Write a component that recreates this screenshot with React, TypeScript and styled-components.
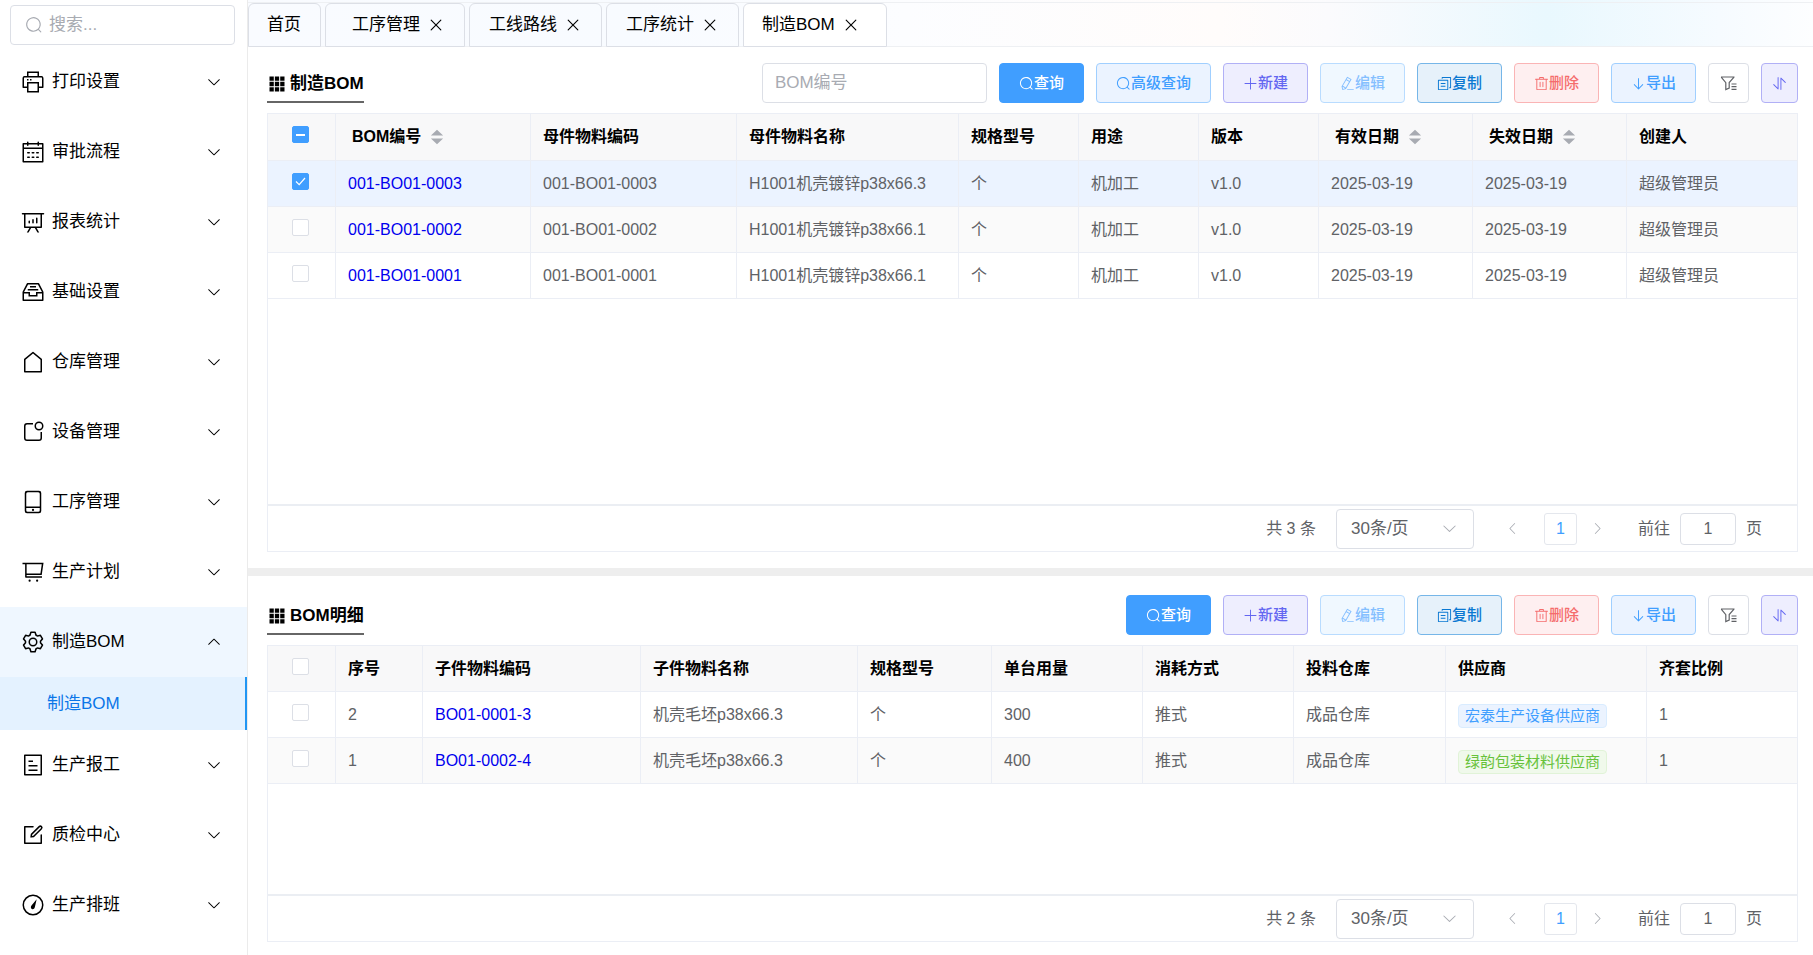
import React, { useState } from 'react';
import styled, { createGlobalStyle, css } from 'styled-components';

const GlobalStyle = createGlobalStyle`
  * { box-sizing: border-box; }
  body { margin: 0; background: #fff; }
  body, button, input, select {
    font-family: "Liberation Sans", "Noto Sans CJK SC", sans-serif;
    line-height: 20px;
  }
`;

/* ---------- icons ---------- */

const paths: Record<string, string> = {
  search:
    'm795.904 750.72 124.992 124.928a32 32 0 0 1-45.248 45.248L750.656 795.904a416 416 0 1 1 45.248-45.248zM480 832a352 352 0 1 0 0-704 352 352 0 0 0 0 704',
  arrowDown:
    'M831.872 340.864 512 652.672 192.128 340.864a30.592 30.592 0 0 0-42.752 0 29.12 29.12 0 0 0 0 41.6L489.664 714.24a32 32 0 0 0 44.672 0l340.288-331.712a29.12 29.12 0 0 0 0-41.728 30.592 30.592 0 0 0-42.752 0z',
  close:
    'M764.288 214.592 512 466.88 259.712 214.592a31.936 31.936 0 0 0-45.12 45.12L466.752 512 214.528 764.224a31.936 31.936 0 1 0 45.12 45.184L512 557.184l252.288 252.288a31.936 31.936 0 0 0 45.12-45.12L557.12 512.064l252.288-252.352a31.936 31.936 0 1 0-45.12-45.184z',
  printer:
    'M256 768H105.024c-14.272 0-19.456-1.472-24.64-4.288a29.056 29.056 0 0 1-12.16-12.096C65.536 746.432 64 741.248 64 727.04V379.072c0-42.816 4.48-58.304 12.8-73.984 8.384-15.616 20.672-27.904 36.288-36.288 15.68-8.32 31.168-12.8 73.984-12.8H256V64h512v192h68.928c42.816 0 58.304 4.48 73.984 12.8 15.616 8.384 27.904 20.672 36.288 36.288 8.32 15.68 12.8 31.168 12.8 73.984v347.904c0 14.272-1.472 19.456-4.288 24.64a29.056 29.056 0 0 1-12.096 12.16c-5.184 2.752-10.368 4.288-24.576 4.288H768v192H256zm64-192v320h384V576zm-64 128V512h512v192h128V379.072c0-29.376-1.408-36.48-5.248-43.776a23.296 23.296 0 0 0-10.048-10.048c-7.232-3.84-14.4-5.248-43.776-5.248H187.072c-29.376 0-36.48 1.408-43.776 5.248a23.296 23.296 0 0 0-10.048 10.048c-3.84 7.232-5.248 14.4-5.248 43.776V704zm64-448h384V128H320zm-64 128h64v64h-64zm128 0h64v64h-64z',
  calendar:
    'M128 384v512h768V192H768v32a32 32 0 1 1-64 0v-32H320v32a32 32 0 0 1-64 0v-32H128v128h768v64zm192-256h384V96a32 32 0 1 1 64 0v32h160a32 32 0 0 1 32 32v768a32 32 0 0 1-32 32H96a32 32 0 0 1-32-32V160a32 32 0 0 1 32-32h160V96a32 32 0 0 1 64 0zm-32 384h64a32 32 0 0 1 0 64h-64a32 32 0 0 1 0-64m0 192h64a32 32 0 1 1 0 64h-64a32 32 0 1 1 0-64m192-192h64a32 32 0 0 1 0 64h-64a32 32 0 0 1 0-64m0 192h64a32 32 0 1 1 0 64h-64a32 32 0 1 1 0-64m192-192h64a32 32 0 1 1 0 64h-64a32 32 0 1 1 0-64m0 192h64a32 32 0 1 1 0 64h-64a32 32 0 1 1 0-64',
  analysis:
    'm665.216 768 110.848 192h-73.856L591.36 768H433.024L322.176 960H248.32l110.848-192H160a32 32 0 0 1-32-32V192H64a32 32 0 0 1 0-64h896a32 32 0 1 1 0 64h-64v544a32 32 0 0 1-32 32zM832 192H192v512h640zM352 448a32 32 0 0 1 32 32v64a32 32 0 0 1-64 0v-64a32 32 0 0 1 32-32m160-64a32 32 0 0 1 32 32v128a32 32 0 0 1-64 0V416a32 32 0 0 1 32-32m160-64a32 32 0 0 1 32 32v192a32 32 0 1 1-64 0V352a32 32 0 0 1 32-32',
  inbox:
    'M288 384h448v64H288zm96-128h256v64H384zM131.456 512H384v128h256V512h252.544L721.856 192H302.144zM896 576H704v128H320V576H128v256h768zM275.776 128h472.448a32 32 0 0 1 28.608 17.664l179.84 359.552A32 32 0 0 1 960 519.552V864a32 32 0 0 1-32 32H96a32 32 0 0 1-32-32V519.552a32 32 0 0 1 3.392-14.336l179.776-359.552A32 32 0 0 1 275.776 128',
  house:
    'M192 413.952V896h640V413.952L512 147.328zM139.52 374.4l352-293.312a32 32 0 0 1 40.96 0l352 293.312A32 32 0 0 1 896 398.976V928a32 32 0 0 1-32 32H160a32 32 0 0 1-32-32V398.976a32 32 0 0 1 11.52-24.576',
  notification:
    'M512 128v64H256a64 64 0 0 0-64 64v512a64 64 0 0 0 64 64h512a64 64 0 0 0 64-64V512h64v256a128 128 0 0 1-128 128H256a128 128 0 0 1-128-128V256a128 128 0 0 1 128-128zM768 384a128 128 0 1 0 0-256 128 128 0 0 0 0 256m0 64a192 192 0 1 1 0-384 192 192 0 0 1 0 384',
  phone:
    'M224 768v96.064a64 64 0 0 0 64 64h448a64 64 0 0 0 64-64V768zm0-64h576V160a64 64 0 0 0-64-64H288a64 64 0 0 0-64 64zm32 288a96 96 0 0 1-96-96V128a96 96 0 0 1 96-96h512a96 96 0 0 1 96 96v768a96 96 0 0 1-96 96zm304-144a48 48 0 1 1-96 0 48 48 0 0 1 96 0',
  trolley:
    'M64 112h898L884 640H176V176H64zM240 176v400h588l58-400zM176 640h64v48h656v64H208a32 32 0 0 1-32-32zM368 833a47 47 0 1 1 0 94 47 47 0 0 1 0-94m320 0a47 47 0 1 1 0 94 47 47 0 0 1 0-94',
  gear:
    'M600.704 64a32 32 0 0 1 30.464 22.208l35.2 109.376c14.784 7.232 28.928 15.36 42.432 24.512l112.384-24.192a32 32 0 0 1 34.432 15.36L944.32 364.8a32 32 0 0 1-4.032 37.504l-77.12 85.12a357.12 357.12 0 0 1 0 49.024l77.12 85.248a32 32 0 0 1 4.032 37.504l-88.704 153.6a32 32 0 0 1-34.432 15.296L708.8 803.904c-13.44 9.088-27.648 17.28-42.368 24.512l-35.264 109.376A32 32 0 0 1 600.704 960H423.296a32 32 0 0 1-30.464-22.208L357.696 828.48a351.616 351.616 0 0 1-42.56-24.64l-112.32 24.256a32 32 0 0 1-34.432-15.36L79.68 659.2a32 32 0 0 1 4.032-37.504l77.12-85.248a357.12 357.12 0 0 1 0-48.896l-77.12-85.248A32 32 0 0 1 79.68 364.8l88.704-153.6a32 32 0 0 1 34.432-15.296l112.32 24.256c13.568-9.152 27.776-17.408 42.56-24.64l35.2-109.312A32 32 0 0 1 423.232 64H600.64zm-23.424 64H446.72l-36.352 113.088-24.512 11.968a294.113 294.113 0 0 0-34.816 20.096l-22.656 15.36-116.224-25.088-65.28 113.152 79.68 88.192-1.92 27.136a293.12 293.12 0 0 0 0 40.192l1.92 27.136-79.808 88.192 65.344 113.152 116.224-25.024 22.656 15.296a294.113 294.113 0 0 0 34.816 20.096l24.512 11.968L446.72 896h130.688l36.48-113.152 24.448-11.904a288.282 288.282 0 0 0 34.752-20.096l22.592-15.296 116.288 25.024 65.28-113.152-79.744-88.192 1.92-27.136a293.12 293.12 0 0 0 0-40.256l-1.92-27.136 79.808-88.128-65.344-113.152-116.288 24.96-22.592-15.232a287.616 287.616 0 0 0-34.752-20.096l-24.448-11.904L577.344 128zM512 320a192 192 0 1 1 0 384 192 192 0 0 1 0-384m0 64a128 128 0 1 0 0 256 128 128 0 0 0 0-256',
  tickets:
    'M192 128v768h640V128zm-32-64h704a32 32 0 0 1 32 32v832a32 32 0 0 1-32 32H160a32 32 0 0 1-32-32V96a32 32 0 0 1 32-32m160 448h384v64H320zm0-192h192v64H320zm0 384h384v64H320z',
  edit:
    'M832 512a32 32 0 1 1 64 0v352a32 32 0 0 1-32 32H160a32 32 0 0 1-32-32V160a32 32 0 0 1 32-32h352a32 32 0 0 1 0 64H192v640h640zM469.952 554.24l52.8-7.552L847.104 222.4a32 32 0 1 0-45.248-45.248L477.44 501.44l-7.552 52.8zm422.4-422.4a96 96 0 0 1 0 135.808l-331.84 331.84a32 32 0 0 1-18.112 9.088L436.8 623.68a32 32 0 0 1-36.224-36.224l15.104-105.6a32 32 0 0 1 9.024-18.112l331.904-331.84a96 96 0 0 1 135.744 0z',
  gauge:
    'M512 896a384 384 0 1 0 0-768 384 384 0 0 0 0 768m0 64a448 448 0 1 1 0-896 448 448 0 0 1 0 896M668 262l-76 330c-22 86-76 112-126 88-52-26-62-84-18-150z',
  plus:
    'M480 480V128a32 32 0 0 1 64 0v352h352a32 32 0 1 1 0 64H544v352a32 32 0 1 1-64 0V544H128a32 32 0 0 1 0-64z',
  pen:
    'm199.04 672.64 193.984 112 224-387.968-193.92-112-224 388.032zm-23.872 60.16 32.896 148.288 144.896-45.696zM455.04 229.248l193.92 112 56.704-98.112-193.984-112-56.64 98.112zM104.32 708.8l384-665.024 304.768 175.936L409.152 884.8h.064l-248.448 78.336zm384 254.272v-64h448v64z',
  copy:
    'M128 320v576h576V320zm-32-64h640a32 32 0 0 1 32 32v640a32 32 0 0 1-32 32H96a32 32 0 0 1-32-32V288a32 32 0 0 1 32-32M960 96v704a32 32 0 0 1-32 32h-96v-64h64V128H384v64h-64V96a32 32 0 0 1 32-32h576a32 32 0 0 1 32 32M256 672h320v64H256zm0-192h320v64H256z',
  trash:
    'M160 256H96a32 32 0 0 1 0-64h256V95.936a32 32 0 0 1 32-32h256a32 32 0 0 1 32 32V192h256a32 32 0 1 1 0 64h-64v672a32 32 0 0 1-32 32H192a32 32 0 0 1-32-32zm448-64v-64H416v64zM224 896h576V256H224zm192-128a32 32 0 0 1-32-32V416a32 32 0 0 1 64 0v320a32 32 0 0 1-32 32m192 0a32 32 0 0 1-32-32V416a32 32 0 0 1 64 0v320a32 32 0 0 1-32 32',
  bottom:
    'M544 805.888V168a32 32 0 1 0-64 0v637.888L246.656 557.952a30.72 30.72 0 0 0-45.312 0 35.52 35.52 0 0 0 0 48.064l288 306.048a30.72 30.72 0 0 0 45.312 0l288-306.048a35.52 35.52 0 0 0 0-48 30.72 30.72 0 0 0-45.312 0L544 805.824z',
  swap:
    'M384 96a32 32 0 0 1 64 0v786.752a32 32 0 0 1-54.592 22.656L95.936 608a32 32 0 0 1 0-45.312h.128a32 32 0 0 1 45.184 0L384 805.632zm192 45.248a32 32 0 0 1 54.592-22.592L928.064 416a32 32 0 0 1 0 45.312h-.128a32 32 0 0 1-45.184 0L640 218.496V928a32 32 0 1 1-64 0z',
  grid:
    'M32 32h274v274H32zM375 32h274v274H375zM718 32h274v274H718zM32 375h274v274H32zM375 375h274v274H375zM718 375h274v274H718zM32 718h274v274H32zM375 718h274v274H375zM718 718h274v274H718z',
  carets: 'M512 96 860 424H164zM512 928 164 600h696z',
};

const Svg = styled.svg<{ $turn?: number }>`
  display: block;
  flex: none;
  fill: currentColor;
  ${(p) => p.$turn && css`transform: rotate(${p.$turn}deg);`}
`;

const Icon = ({ name, size, turn }: { name: string; size: number; turn?: number }) => (
  <Svg viewBox="0 0 1024 1024" width={size} height={size} $turn={turn} fillRule="evenodd" aria-hidden="true">
    <path d={paths[name]} />
  </Svg>
);

const FilterIcon = () => (
  <Svg viewBox="0 0 17 17" width={17} height={17} aria-hidden="true">
    <path
      d="M1 2h13.5M1.2 2.2 5.8 7.6v7l3.4-1.6V7.6l4.8-5.4M11.5 9h5M11.5 11.7h5M11.5 14.4h5"
      fill="none"
      stroke="currentColor"
      strokeWidth="1.2"
    />
  </Svg>
);

/* ---------- page frame ---------- */

const Page = styled.div`
  display: flex;
  min-height: 100vh;
  color: #000;
  font-size: 17px;
`;

const Sidebar = styled.aside`
  flex: none;
  width: 248px;
  padding-top: 5px;
  border-right: 1px solid #ebebeb;
`;

const SearchBox = styled.label`
  display: flex;
  align-items: center;
  gap: 6px;
  height: 40px;
  margin: 0 12px 2px 10px;
  padding: 0 14px;
  border: 1px solid #dcdfe6;
  border-radius: 4px;
  color: #a8abb2;
`;

const SearchInput = styled.input`
  flex: 1;
  min-width: 0;
  padding: 0;
  border: 0;
  outline: 0;
  background: none;
  font-size: 17px;
  &::placeholder { color: #a8abb2; }
`;

const Menu = styled.ul`
  margin: 0;
  padding: 0;
  list-style: none;
`;

const MenuButton = styled.button<{ $open?: boolean }>`
  display: flex;
  align-items: center;
  gap: 7px;
  width: 100%;
  height: 70px;
  padding: 0 25px 0 21px;
  border: 0;
  background: ${(p) => (p.$open ? '#eff7ff' : 'none')};
  color: #000;
  font-size: 17px;
  text-align: left;
  cursor: pointer;
`;

const MenuText = styled.span`
  flex: 1;
`;

const SubLink = styled.a`
  display: flex;
  align-items: center;
  height: 53px;
  padding-left: 47px;
  border-right: 2px solid #2196f3;
  background: #e4f2ff;
  color: #0b76e8;
  text-decoration: none;
`;

const Main = styled.main`
  display: flex;
  flex: 1;
  flex-direction: column;
  min-width: 0;
`;

const TabStrip = styled.nav`
  height: 47px;
  padding-top: 2px;
  background: linear-gradient(90deg, #f9fbff 0%, #f8fbff 25%, #fcfdff 42%, #fffcfb 62%, #fbfbfd 69%, #e9f8fe 83%, #f6fbff 94%, #fdfeff 100%);
`;

const TabList = styled.ul`
  display: flex;
  gap: 4px;
  height: 45px;
  margin: 0;
  padding: 0;
  border: solid #eef0f3;
  border-width: 1px 0;
  list-style: none;
`;

const Tab = styled.li<{ $active?: boolean; $lead: number; $trail: number }>`
  display: flex;
  align-items: center;
  gap: 7px;
  height: 44px;
  padding: 0 ${(p) => p.$trail}px 0 ${(p) => p.$lead}px;
  border: 1px solid #dcdfe6;
  border-radius: 6px 6px 0 0;
  background: ${(p) => (p.$active ? '#fff' : 'transparent')};
`;

const TabLink = styled.a`
  color: #000;
  text-decoration: none;
  white-space: nowrap;
`;

const PlainButton = styled.button`
  display: flex;
  align-items: center;
  justify-content: center;
  padding: 0;
  border: 0;
  background: none;
  color: inherit;
  cursor: pointer;
`;

const Panel = styled.section<{ $grow: number; $top: number; $bottom: number }>`
  display: flex;
  flex: ${(p) => p.$grow} 0 0px;
  flex-direction: column;
  gap: 10px;
  padding: ${(p) => p.$top}px 15px ${(p) => p.$bottom}px 19px;
`;

const Splitter = styled.div`
  flex: none;
  height: 8px;
  background: #eee;
`;

const Toolbar = styled.div`
  display: flex;
  align-items: flex-end;
  justify-content: space-between;
`;

const Title = styled.h2`
  display: flex;
  align-items: center;
  gap: 5px;
  height: 40px;
  margin: 0;
  padding: 3px 0 0 2px;
  border-bottom: 2px solid #666;
  font-size: 17px;
  white-space: nowrap;
`;

const Actions = styled.div`
  display: flex;
  gap: 12px;
`;

const FieldInput = styled.input`
  width: 225px;
  height: 40px;
  padding: 0 12px;
  border: 1px solid #dcdfe6;
  border-radius: 4px;
  outline: 0;
  font-size: 17px;
  &::placeholder { color: #a8abb2; }
`;

const tones = {
  primary: ['#409eff', '#409eff', '#fff'],
  light: ['#ebf3ff', '#a0cfff', '#409eff'],
  violet: ['#eeeefe', '#b1b0f6', '#6366f1'],
  faded: ['#f0f8ff', '#b9dcff', '#85bfff'],
  deep: ['#e6f1fa', '#76b6e8', '#0a78d2'],
  danger: ['#feeff0', '#fab4b5', '#f56c6c'],
  plain: ['#fff', '#dcdfe6', '#606266'],
};
type Tone = keyof typeof tones;

const Button = styled.button<{ $tone: Tone; $pad?: number }>`
  display: flex;
  align-items: center;
  justify-content: center;
  height: 40px;
  padding: 0 ${(p) => p.$pad ?? 19}px;
  border: 1px solid ${(p) => tones[p.$tone][1]};
  border-radius: 4px;
  background: ${(p) => tones[p.$tone][0]};
  color: ${(p) => tones[p.$tone][2]};
  font-size: 15px;
  font-weight: 500;
  white-space: nowrap;
  cursor: pointer;
`;

/* ---------- data grid ---------- */

const GridBox = styled.div`
  display: flex;
  flex: 1;
  flex-direction: column;
  border: 1px solid #ebeef5;
`;

const GridScroll = styled.div`
  flex: 1;
  overflow-x: auto;
`;

const Table = styled.table`
  width: 100%;
  border-collapse: separate;
  border-spacing: 0;
  table-layout: fixed;
  font-size: 16px;
`;

const cell = css`
  height: 46px;
  padding: 0 12px;
  border: solid #ebeef5;
  border-width: 0 1px 1px 0;
  text-align: left;
  white-space: nowrap;
  &:last-child { border-right: 0; }
`;

const Th = styled.th`
  ${cell}
  background: #f8f8f9;
`;

const Td = styled.td`
  ${cell}
  color: #606266;
`;

const Tr = styled.tr<{ $shade?: 'selected' | 'stripe' }>`
  background: ${(p) => (p.$shade === 'selected' ? '#ebf3ff' : p.$shade === 'stripe' ? '#fafafa' : '#fff')};
`;

const SortButton = styled(PlainButton)`
  gap: 7px;
  height: 46px;
  padding-left: 4px;
  font-size: 16px;
  font-weight: 700;
  & > svg { color: #a8abb2; }
`;

const CodeLink = styled.a`
  color: #0000ee;
  text-decoration: none;
`;

const Tag = styled.span<{ $green?: boolean }>`
  display: inline-block;
  height: 24px;
  margin-top: 2px;
  padding: 0 6px;
  border: 1px solid ${(p) => (p.$green ? '#e1f3d8' : '#d9ecff')};
  border-radius: 4px;
  background: ${(p) => (p.$green ? '#f0f9eb' : '#ebf3ff')};
  color: ${(p) => (p.$green ? '#67c23a' : '#409eff')};
  font-size: 15px;
  line-height: 22px;
  vertical-align: middle;
`;

const Check = styled.input`
  display: block;
  width: 17px;
  height: 17px;
  margin: 0 12px 5px;
  border: 1px solid #dcdfe6;
  border-radius: 2px;
  background: #fff center / 15px 15px no-repeat;
  appearance: none;
  &:checked {
    border-color: #409eff;
    background-color: #409eff;
    background-image: url("data:image/svg+xml,%3Csvg xmlns='http://www.w3.org/2000/svg' viewBox='0 0 15 15'%3E%3Cpath d='M3 7.5l3.2 3.2L12 4' fill='none' stroke='white' stroke-width='1.2'/%3E%3C/svg%3E");
  }
  &:indeterminate {
    border-color: #409eff;
    background-color: #409eff;
    background-image: linear-gradient(#fff, #fff);
    background-size: 9px 2px;
  }
`;

const Pager = styled.div`
  display: flex;
  align-items: center;
  justify-content: flex-end;
  height: 47px;
  padding-right: 35px;
  border-top: 2px solid #ebeef3;
  color: #606266;
  font-size: 16px;
`;

const SelectWrap = styled.span`
  display: grid;
  align-items: center;
  width: 138px;
  margin: 0 18px 0 20px;
  & > * { grid-area: 1 / 1; }
  & > svg { justify-self: end; margin-right: 16px; color: #a8abb2; pointer-events: none; }
`;

const Select = styled.select`
  height: 40px;
  padding: 0 14px;
  border: 1px solid #dcdfe6;
  border-radius: 4px;
  background: #fff;
  color: #606266;
  font-size: 17px;
  appearance: none;
`;

const Step = styled(PlainButton)`
  width: 42px;
  height: 32px;
  color: #a8abb2;
`;

const PageButton = styled(PlainButton)`
  width: 33px;
  height: 32px;
  margin-left: 10px;
  border: 1px solid #e4e7ed;
  border-radius: 3px;
  color: #409eff;
  font-size: 16px;
`;

const Jump = styled.label`
  display: flex;
  align-items: center;
  gap: 10px;
  margin-left: 19px;
`;

const JumpInput = styled.input`
  width: 56px;
  height: 32px;
  padding: 0;
  border: 1px solid #dcdfe6;
  border-radius: 4px;
  outline: 0;
  color: #606266;
  font-size: 16px;
  text-align: center;
`;

/* ---------- data ---------- */

const menuTop = [
  ['printer', '打印设置'],
  ['calendar', '审批流程'],
  ['analysis', '报表统计'],
  ['inbox', '基础设置'],
  ['house', '仓库管理'],
  ['notification', '设备管理'],
  ['phone', '工序管理'],
  ['trolley', '生产计划'],
];
const menuBottom = [
  ['tickets', '生产报工'],
  ['edit', '质检中心'],
  ['gauge', '生产排班'],
];

const tabs = [
  { text: '首页', lead: 18, trail: 19 },
  { text: '工序管理', lead: 26, trail: 19, closable: true },
  { text: '工线路线', lead: 19, trail: 19, closable: true },
  { text: '工序统计', lead: 19, trail: 19, closable: true },
  { text: '制造BOM', lead: 18, trail: 26, closable: true, active: true },
];

type Column = { title: string; width: number; sort?: boolean; link?: boolean; tag?: boolean };

const bomColumns: Column[] = [
  { title: 'BOM编号', width: 195, sort: true, link: true },
  { title: '母件物料编码', width: 206 },
  { title: '母件物料名称', width: 222 },
  { title: '规格型号', width: 120 },
  { title: '用途', width: 120 },
  { title: '版本', width: 120 },
  { title: '有效日期', width: 154, sort: true },
  { title: '失效日期', width: 154, sort: true },
  { title: '创建人', width: 170 },
];
const bomRows = [
  ['001-BO01-0003', '001-BO01-0003', 'H1001机壳镀锌p38x66.3', '个', '机加工', 'v1.0', '2025-03-19', '2025-03-19', '超级管理员'],
  ['001-BO01-0002', '001-BO01-0002', 'H1001机壳镀锌p38x66.1', '个', '机加工', 'v1.0', '2025-03-19', '2025-03-19', '超级管理员'],
  ['001-BO01-0001', '001-BO01-0001', 'H1001机壳镀锌p38x66.1', '个', '机加工', 'v1.0', '2025-03-19', '2025-03-19', '超级管理员'],
];

const detailColumns: Column[] = [
  { title: '序号', width: 87 },
  { title: '子件物料编码', width: 218, link: true },
  { title: '子件物料名称', width: 217 },
  { title: '规格型号', width: 134 },
  { title: '单台用量', width: 151 },
  { title: '消耗方式', width: 151 },
  { title: '投料仓库', width: 152 },
  { title: '供应商', width: 201, tag: true },
  { title: '齐套比例', width: 150 },
];
const detailRows = [
  ['2', 'BO01-0001-3', '机壳毛坯p38x66.3', '个', '300', '推式', '成品仓库', '宏泰生产设备供应商', '1'],
  ['1', 'BO01-0002-4', '机壳毛坯p38x66.3', '个', '400', '推式', '成品仓库', '绿韵包装材料供应商', '1'],
];

/* ---------- parts ---------- */

const MenuItem = ({ icon, text }: { icon: string; text: string }) => (
  <li>
    <MenuButton type="button" aria-expanded={false}>
      <Icon name={icon} size={24} />
      <MenuText>{text}</MenuText>
      <Icon name="arrowDown" size={16} />
    </MenuButton>
  </li>
);

const CommonActions = () => (
  <>
    <Button type="button" $tone="violet"><Icon name="plus" size={15} />新建</Button>
    <Button type="button" $tone="faded"><Icon name="pen" size={15} />编辑</Button>
    <Button type="button" $tone="deep"><Icon name="copy" size={15} />复制</Button>
    <Button type="button" $tone="danger"><Icon name="trash" size={15} />删除</Button>
    <Button type="button" $tone="light"><Icon name="bottom" size={15} />导出</Button>
    <Button type="button" $tone="plain" $pad={11} aria-label="筛选"><FilterIcon /></Button>
    <Button type="button" $tone="violet" $pad={10} aria-label="排序"><Icon name="swap" size={15} /></Button>
  </>
);

const DataGrid = ({ columns, rows, initial }: { columns: Column[]; rows: string[][]; initial: number[] }) => {
  const [picked, setPicked] = useState<number[]>(initial);
  const all = picked.length === rows.length;
  const toggle = (i: number) =>
    setPicked(picked.includes(i) ? picked.filter((n) => n !== i) : [...picked, i]);

  return (
    <GridBox>
      <GridScroll>
        <Table>
          <colgroup>
            <col width={68} />
            {columns.map((c) => <col key={c.title} width={c.width} />)}
          </colgroup>
          <thead>
            <tr>
              <Th>
                <Check
                  type="checkbox"
                  aria-label="全选"
                  checked={all}
                  ref={(el) => { if (el) el.indeterminate = picked.length > 0 && !all; }}
                  onChange={() => setPicked(all ? [] : rows.map((_, i) => i))}
                />
              </Th>
              {columns.map((c) => (
                <Th key={c.title}>
                  {c.sort ? <SortButton type="button">{c.title}<Icon name="carets" size={18} /></SortButton> : c.title}
                </Th>
              ))}
            </tr>
          </thead>
          <tbody>
            {rows.map((row, i) => (
              <Tr key={row[0]} $shade={picked.includes(i) ? 'selected' : i % 2 ? 'stripe' : undefined}>
                <Td>
                  <Check type="checkbox" aria-label={`选择 ${row[0]}`} checked={picked.includes(i)} onChange={() => toggle(i)} />
                </Td>
                {row.map((value, n) => (
                  <Td key={columns[n].title}>
                    {columns[n].link ? <CodeLink href="#">{value}</CodeLink>
                      : columns[n].tag ? <Tag $green={i % 2 === 1}>{value}</Tag>
                      : value}
                  </Td>
                ))}
              </Tr>
            ))}
          </tbody>
        </Table>
      </GridScroll>
      <Pager>
        <span>共 {rows.length} 条</span>
        <SelectWrap>
          <Select aria-label="每页条数" defaultValue="30">
            <option value="30">30条/页</option>
          </Select>
          <Icon name="arrowDown" size={17} />
        </SelectWrap>
        <Step type="button" aria-label="上一页"><Icon name="arrowDown" size={15} turn={90} /></Step>
        <PageButton type="button">1</PageButton>
        <Step type="button" aria-label="下一页"><Icon name="arrowDown" size={15} turn={-90} /></Step>
        <Jump>
          前往
          <JumpInput defaultValue="1" />
          页
        </Jump>
      </Pager>
    </GridBox>
  );
};

export default function App() {
  return (
    <>
      <GlobalStyle />
      <Page>
        <Sidebar>
          <SearchBox>
            <Icon name="search" size={18} />
            <SearchInput placeholder="搜索..." aria-label="搜索" />
          </SearchBox>
          <Menu>
            {menuTop.map(([icon, text]) => <MenuItem key={text} icon={icon} text={text} />)}
            <li>
              <MenuButton type="button" $open aria-expanded>
                <Icon name="gear" size={24} />
                <MenuText>制造BOM</MenuText>
                <Icon name="arrowDown" size={16} turn={180} />
              </MenuButton>
              <SubLink href="#">制造BOM</SubLink>
            </li>
            {menuBottom.map(([icon, text]) => <MenuItem key={text} icon={icon} text={text} />)}
          </Menu>
        </Sidebar>
        <Main>
          <TabStrip>
            <TabList>
              {tabs.map((t) => (
                <Tab key={t.text} $active={t.active} $lead={t.lead} $trail={t.trail}>
                  <TabLink href="#">{t.text}</TabLink>
                  {t.closable && <PlainButton type="button" aria-label={`关闭${t.text}`}><Icon name="close" size={18} /></PlainButton>}
                </Tab>
              ))}
            </TabList>
          </TabStrip>
          <Panel $grow={489} $top={16} $bottom={16}>
            <Toolbar>
              <Title><Icon name="grid" size={16} />制造BOM</Title>
              <Actions>
                <FieldInput placeholder="BOM编号" aria-label="BOM编号" />
                <Button type="button" $tone="primary"><Icon name="search" size={15} />查询</Button>
                <Button type="button" $tone="light"><Icon name="search" size={15} />高级查询</Button>
                <CommonActions />
              </Actions>
            </Toolbar>
            <DataGrid columns={bomColumns} rows={bomRows} initial={[0]} />
          </Panel>
          <Splitter />
          <Panel $grow={347} $top={19} $bottom={13}>
            <Toolbar>
              <Title><Icon name="grid" size={16} />BOM明细</Title>
              <Actions>
                <Button type="button" $tone="primary"><Icon name="search" size={15} />查询</Button>
                <CommonActions />
              </Actions>
            </Toolbar>
            <DataGrid columns={detailColumns} rows={detailRows} initial={[]} />
          </Panel>
        </Main>
      </Page>
    </>
  );
}
